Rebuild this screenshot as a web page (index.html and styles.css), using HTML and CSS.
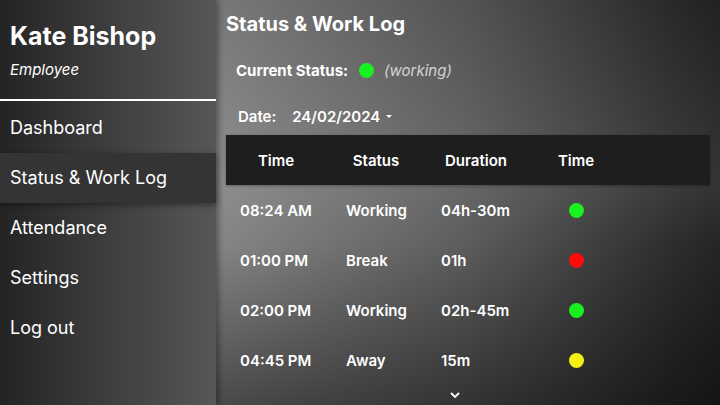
FILE: index.html
```html
<!DOCTYPE html>
<html>
<head>
    <title>Status &amp; Work Log</title>
    <link rel="stylesheet" href="styles.css">
</head>
<body>
    <div class="layout">
        <aside class="sidebar">
            <div class="profile">
                <div class="name">Kate Bishop</div>
                <div class="role">Employee</div>
            </div>
            <nav class="menu">
                <div class="menu-item">Dashboard</div>
                <div class="menu-item active">Status &amp; Work Log</div>
                <div class="menu-item">Attendance</div>
                <div class="menu-item">Settings</div>
                <div class="menu-item">Log out</div>
            </nav>
        </aside>

        <main class="main">
            <h1>Status &amp; Work Log</h1>

            <div class="current">
                <span class="label">Current Status:</span>
                <span class="dot green"></span>
                <span class="note">(working)</span>
            </div>

            <div class="date-row">
                <span class="label">Date:</span>
                <span class="date">24/02/2024</span>
                <span class="caret"></span>
            </div>

            <div class="table">
                <div class="table-head">
                    <div>Time</div>
                    <div>Status</div>
                    <div>Duration</div>
                    <div>Time</div>
                </div>
                <div class="row">
                    <div>08:24 AM</div>
                    <div>Working</div>
                    <div>04h-30m</div>
                    <div><span class="dot green"></span></div>
                </div>
                <div class="row">
                    <div>01:00 PM</div>
                    <div>Break</div>
                    <div>01h</div>
                    <div><span class="dot red"></span></div>
                </div>
                <div class="row">
                    <div>02:00 PM</div>
                    <div>Working</div>
                    <div>02h-45m</div>
                    <div><span class="dot green"></span></div>
                </div>
                <div class="row">
                    <div>04:45 PM</div>
                    <div>Away</div>
                    <div>15m</div>
                    <div><span class="dot yellow"></span></div>
                </div>
            </div>

            <div class="more">
                <svg width="12" height="8" viewBox="0 0 12 8">
                    <path d="M2 2 L6 6 L10 2" fill="none" stroke="#fff" stroke-width="1.8"/>
                </svg>
            </div>
        </main>
    </div>
</body>
</html>
```

FILE: styles.css
```css
body {
    margin: 0;
    padding: 0;
    font-family: Inter, "Noto Sans", sans-serif;
    color: #fff;
    background: #222;
}
.layout {
    display: flex;
    width: 720px;
    height: 405px;
    overflow: hidden;
}
.sidebar {
    width: 216px;
    flex-shrink: 0;
    background: linear-gradient(to right, #242424, #575757);
    box-shadow: 3px 0 6px rgba(0, 0, 0, 0.35);
    position: relative;
    z-index: 1;
}
.profile {
    padding: 21px 10px 0 10px;
    height: 78px;
    border-bottom: 2px solid #fff;
}
.name {
    font-size: 25px;
    font-weight: 700;
    line-height: 30px;
}
.role {
    font-size: 15px;
    font-style: italic;
    margin-top: 9px;
}
.menu {
    padding-top: 2px;
}
.menu-item {
    height: 50px;
    line-height: 50px;
    padding-left: 10px;
    font-size: 18px;
}
.menu-item.active {
    background: #343434;
    box-shadow: 0 2px 6px rgba(0, 0, 0, 0.4);
}
.main {
    flex: 1;
    padding: 10px 10px 0 10px;
    background:
        linear-gradient(to bottom, rgba(0, 0, 0, 0.1) 0%, rgba(255, 255, 255, 0.07) 45%, rgba(0, 0, 0, 0) 60%, rgba(0, 0, 0, 0.45) 100%),
        linear-gradient(to right, #868686 0%, #5c5c5c 50%, #2e2e2e 90%, #252525 100%);
}
h1 {
    margin: 0;
    padding-top: 2px;
    font-size: 20px;
    font-weight: 700;
    line-height: 24px;
}
.current {
    display: flex;
    align-items: center;
    height: 24px;
    margin-top: 22px;
    padding-left: 10px;
    font-size: 15px;
}
.label {
    font-weight: 700;
}
.current .dot {
    margin-left: 11px;
}
.note {
    margin-left: 10px;
    font-style: italic;
    color: #d4d4d4;
}
.date-row {
    display: flex;
    align-items: center;
    height: 24px;
    margin-top: 22px;
    padding-left: 12px;
}
.date-row .label {
    font-size: 15px;
    font-weight: 600;
}
.date {
    margin-left: 16px;
    font-size: 15px;
    font-weight: 600;
}
.caret {
    margin-left: 6px;
    width: 0;
    height: 0;
    border-left: 3px solid transparent;
    border-right: 3px solid transparent;
    border-top: 3px solid #fff;
}
.dot {
    display: inline-block;
    width: 15px;
    height: 15px;
    border-radius: 50%;
}
.green {
    background: #19f01f;
}
.red {
    background: #ff0a0a;
}
.yellow {
    background: #f4f014;
}
.table {
    margin-top: 7px;
}
.table-head {
    display: grid;
    grid-template-columns: 100px 100px 100px 100px;
    height: 50px;
    align-items: center;
    background: #1e1e1e;
    font-size: 15px;
    font-weight: 600;
    text-align: center;
    box-shadow: 0 1px 3px rgba(0, 0, 0, 0.3);
}
.row {
    display: grid;
    grid-template-columns: 106px 95px 128px 16px;
    height: 50px;
    align-items: center;
    padding-left: 14px;
    font-size: 15px;
    font-weight: 600;
}
.row .dot {
    display: block;
}
.more {
    display: flex;
    justify-content: center;
    padding-right: 26px;
    height: 20px;
    align-items: center;
}
.more svg {
    display: block;
}
```
